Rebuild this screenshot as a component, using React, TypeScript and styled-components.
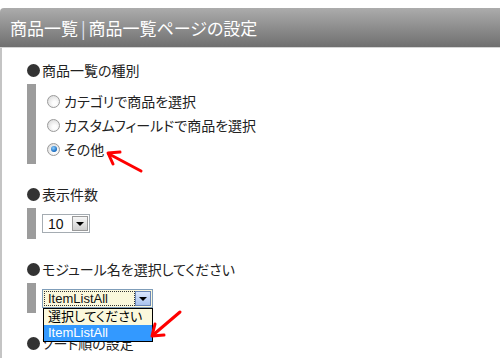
import styled, { createGlobalStyle } from 'styled-components'

const GlobalStyle = createGlobalStyle`
  body {
    margin: 0;
    background: #fff;
    font-family: "Noto Sans CJK JP", sans-serif;
  }
`

const Page = styled.div`
  position: relative;
  width: 500px;
  height: 358px;
  overflow: hidden;
  padding-top: 8px;
  box-sizing: border-box;
`

const Header = styled.div`
  height: 39px;
  display: flex;
  align-items: center;
  padding-left: 10px;
  border-top-left-radius: 4px;
  border-bottom: 1px solid #d4d4d4;
  background: linear-gradient(#acacac, #6f6f6f);
  color: #fff;
  font-size: 17px;
  font-feature-settings: 'palt';

  .sep {
    color: #dfe6f4;
    margin: 0 3px;
  }
`

const Content = styled.div`
  border-left: 2px solid #c4c4c4;
  padding-top: 12px;
  height: 400px;
`

const Section = styled.div`
  margin: 0 0 20px 25px;
`

const Heading = styled.div`
  display: flex;
  align-items: center;
  height: 20px;
  font-size: 14px;
  color: #222;
  font-feature-settings: 'palt';
`

const Bullet = styled.span`
  width: 13px;
  height: 13px;
  border-radius: 50%;
  background: #333;
  margin-right: 2px;
`

const Group = styled.div<{ $pad: string }>`
  margin-top: 4px;
  border-left: 9px solid #9c9c9c;
  padding: ${(p) => p.$pad};
  display: flex;
  flex-direction: column;
`

const RadioRow = styled.label`
  display: flex;
  align-items: center;
  height: 24px;
  font-size: 14px;
  color: #222;
  font-feature-settings: 'palt';
`

const Radio = styled.span<{ $checked?: boolean }>`
  width: 11px;
  height: 11px;
  margin: 0 4px 0 5px;
  border-radius: 50%;
  border: 1px solid #9a9a9a;
  background: radial-gradient(circle at 60% 65%, #fdfdfd 20%, #d8d8d8 90%);
  display: flex;
  align-items: center;
  justify-content: center;

  &::after {
    content: '';
    display: ${(p) => (p.$checked ? 'block' : 'none')};
    width: 6px;
    height: 6px;
    border-radius: 50%;
    background: radial-gradient(circle at 40% 35%, #8fd0ff, #0a5fb8 75%);
  }
`

const SelectWrap = styled.div`
  position: relative;
  width: fit-content;
`

const SelectBox = styled.div<{ $width: number; $focused?: boolean }>`
  width: ${(p) => p.$width}px;
  height: 19px;
  box-sizing: border-box;
  display: flex;
  align-items: center;
  border: 1px solid ${(p) => (p.$focused ? '#7f9db9' : '#a5acb2')};
  background: ${(p) => (p.$focused ? '#fbf8dc' : '#fff')};
  font-family: "Liberation Sans", "Noto Sans CJK JP", sans-serif;
  font-size: ${(p) => (p.$focused ? 13 : 14)}px;
  color: #111;
  padding: 1px;
`

const SelectText = styled.span<{ $focused?: boolean }>`
  flex: 1;
  height: 100%;
  display: flex;
  align-items: center;
  padding-left: 3px;
  box-sizing: border-box;
  border: 1px dotted ${(p) => (p.$focused ? '#333' : 'transparent')};
`

const ArrowButton = styled.span<{ $focused?: boolean }>`
  width: 16px;
  height: 15px;
  box-sizing: border-box;
  display: flex;
  align-items: center;
  justify-content: center;
  border: 1px solid ${(p) => (p.$focused ? '#6a86b6' : '#9a9a9a')};
  background: ${(p) =>
    p.$focused ? 'linear-gradient(#dbe7fc, #a9c3ef)' : 'linear-gradient(#f6f6f6, #cfcfcf)'};

  &::after {
    content: '';
    border-left: 4px solid transparent;
    border-right: 4px solid transparent;
    border-top: 4px solid #000;
  }
`

const DropList = styled.div`
  position: absolute;
  top: 100%;
  left: 1px;
  width: 110px;
  box-sizing: border-box;
  border: 1px solid #000;
  font-family: "Liberation Sans", "Noto Sans CJK JP", sans-serif;
  font-size: 13px;
  font-feature-settings: 'palt';
  z-index: 2;
`

const DropItem = styled.div<{ $active?: boolean }>`
  height: 16px;
  line-height: 16px;
  padding-left: 4px;
  background: ${(p) => (p.$active ? '#3399ff' : '#fbf8dc')};
  color: ${(p) => (p.$active ? '#fff' : '#000')};
`

const Overlay = styled.svg`
  position: absolute;
  top: 0;
  left: 0;
  pointer-events: none;
  z-index: 3;
`

const radios = [
  { label: 'カテゴリで商品を選択', checked: false },
  { label: 'カスタムフィールドで商品を選択', checked: false },
  { label: 'その他', checked: true },
]

export default function App() {
  return (
    <>
      <GlobalStyle />
      <Page>
        <Header>
          商品一覧<span className="sep">|</span>商品一覧ページの設定
        </Header>
        <Content>
          <Section>
            <Heading>
              <Bullet />
              商品一覧の種別
            </Heading>
            <Group $pad="5px 0 3px 6px">
              {radios.map((r) => (
                <RadioRow key={r.label}>
                  <Radio $checked={r.checked} />
                  {r.label}
                </RadioRow>
              ))}
            </Group>
          </Section>

          <Section>
            <Heading>
              <Bullet />
              表示件数
            </Heading>
            <Group $pad="6px 0 6px 6px">
              <SelectBox $width={48}>
                <SelectText>10</SelectText>
                <ArrowButton />
              </SelectBox>
            </Group>
          </Section>

          <Section>
            <Heading>
              <Bullet />
              モジュール名を選択してください
            </Heading>
            <Group $pad="6px 0 5px 6px">
              <SelectWrap>
                <SelectBox $width={111} $focused>
                  <SelectText $focused>ItemListAll</SelectText>
                  <ArrowButton $focused />
                </SelectBox>
                <DropList>
                  <DropItem>選択してください</DropItem>
                  <DropItem $active>ItemListAll</DropItem>
                </DropList>
              </SelectWrap>
            </Group>
          </Section>

          <Section>
            <Heading>
              <Bullet />
              ソート順の設定
            </Heading>
          </Section>
        </Content>

        <Overlay width="500" height="358">
          <g stroke="#f00" strokeWidth="3" fill="none" strokeLinecap="round" strokeLinejoin="round">
            <line x1="141" y1="171" x2="109" y2="154" />
            <polyline points="113,164 108,153 120,152" />
            <line x1="180" y1="312" x2="153" y2="335" />
            <polyline points="155,324 152,336 164,335" />
          </g>
        </Overlay>
      </Page>
    </>
  )
}
